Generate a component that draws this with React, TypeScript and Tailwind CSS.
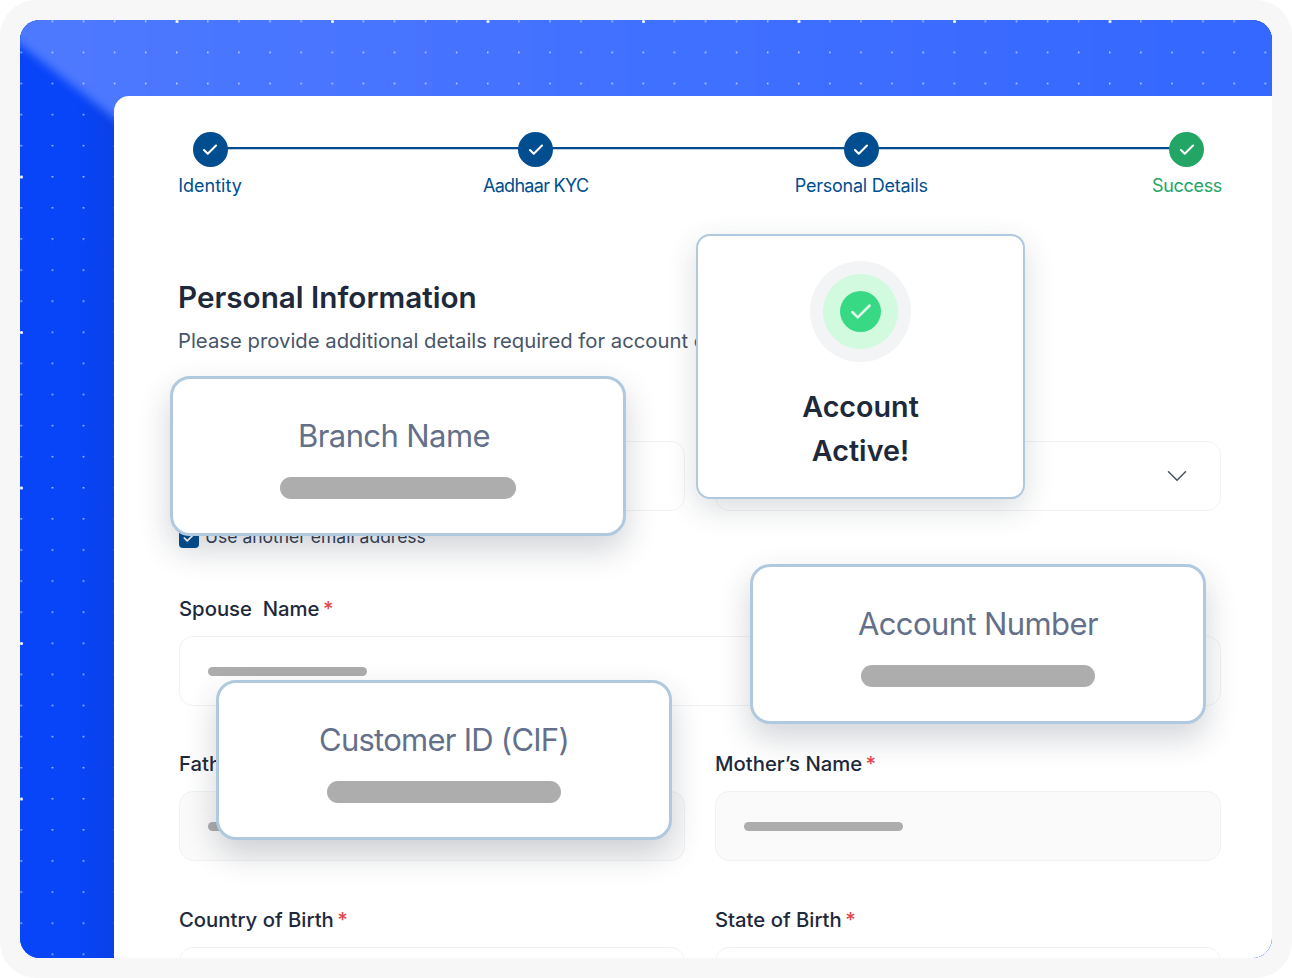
import { Check, ChevronDown } from "lucide-react"

const steps = [
  { label: "Identity", done: false, tracking: "tracking-normal" },
  { label: "Aadhaar KYC", done: false, tracking: "tracking-[-0.7px]" },
  { label: "Personal Details", done: false, tracking: "tracking-[-0.25px]" },
  { label: "Success", done: true, tracking: "tracking-[-0.3px]" },
]

function Stepper() {
  return (
    <div className="relative ml-[61px] mr-[50px] flex justify-between">
      <div className="absolute left-[35px] right-[35px] top-[15px] h-[2px] bg-[#004e8f] shadow-[0_1px_0_#b9cde0]" />
      {steps.map((s) => (
        <div key={s.label} className="relative flex w-[70px] flex-col items-center">
          <div className={`flex h-[35px] w-[35px] items-center justify-center rounded-full ${s.done ? "bg-[#22a565]" : "bg-[#004e8f]"}`}>
            <Check className="h-[18px] w-[18px] text-white" strokeWidth={2.8} />
          </div>
          <span className={`mt-[7px] whitespace-nowrap text-[18px] leading-[24px] ${s.tracking} ${s.done ? "text-[#22a565]" : "text-[#004e8f]"}`}>
            {s.label}
          </span>
        </div>
      ))}
    </div>
  )
}

function Label({ text }: { text: string }) {
  return (
    <div className="whitespace-pre text-[20.3px] leading-[26px] font-medium text-[#1e293b]">
      {text} <span className="-ml-[2px] text-[#e5484d]">*</span>
    </div>
  )
}

function Input({ bar = false, filled = false, chevron = false }: { bar?: boolean; filled?: boolean; chevron?: boolean }) {
  return (
    <div className={`mt-[14px] flex h-[70px] items-center justify-between rounded-[14px] border border-[#f1f2f4] pl-[28px] pr-[26px] ${filled ? "bg-[#fafafa]" : "bg-white"}`}>
      {bar && <div className="h-[9px] w-[159px] rounded-full bg-[#adadad]" />}
      {chevron && <ChevronDown className="ml-auto h-[34px] w-[34px] text-[#4b5563]" strokeWidth={1.1} />}
    </div>
  )
}

function FloatCard({ title, className, barWidth, titleClass = "" }: { title: string; className: string; barWidth: string; titleClass?: string }) {
  return (
    <div className={`absolute flex h-[160px] w-[456px] flex-col items-center rounded-[20px] border-[3px] border-[#b1c9df] bg-white pt-[35px] shadow-[0_14px_32px_rgba(30,41,59,0.2)] ${className}`}>
      <div className={`text-[31px] leading-[44px] tracking-[-0.6px] text-[#64708a] ${titleClass}`}>{title}</div>
      <div className={`mt-[19px] h-[22px] rounded-full bg-[#adadad] ${barWidth}`} />
    </div>
  )
}

export default function App() {
  return (
    <div className="h-[978px] w-[1292px] overflow-hidden bg-white font-['Inter',sans-serif]">
      <div className="h-full rounded-[36px] bg-[#f7f7f7] p-[20px]">
        <div className="relative h-[938px] overflow-hidden rounded-[20px] bg-[#0a45f5]">
          <svg className="absolute inset-0" width="1252" height="938" viewBox="0 0 1252 938">
            <defs>
              <linearGradient id="band" x1="0" y1="0" x2="1" y2="0">
                <stop offset="0" stopColor="#4f7aff" />
                <stop offset="1" stopColor="#3366ff" />
              </linearGradient>
              <linearGradient id="side" x1="0" y1="0" x2="94" y2="0" gradientUnits="userSpaceOnUse">
                <stop offset="0" stopColor="#0844f8" />
                <stop offset="0.6" stopColor="#0844f8" />
                <stop offset="1" stopColor="#0a40e6" />
              </linearGradient>
              <filter id="soft" x="-10%" y="-10%" width="120%" height="130%">
                <feGaussianBlur stdDeviation="5" />
              </filter>
              <pattern id="dots" x="0.5" y="0.5" width="31.1" height="31.1" patternUnits="userSpaceOnUse">
                <rect width="1.5" height="1.5" fill="#ffffff" fillOpacity="0.75" />
              </pattern>
              <pattern id="bigDots" x="0" y="0" width="155.5" height="155.5" patternUnits="userSpaceOnUse">
                <circle cx="1.5" cy="1.5" r="1.5" fill="#ffffff" />
              </pattern>
            </defs>
            <rect width="1252" height="938" fill="url(#side)" />
            <polygon points="-50,-15 -50,-50 1300,-50 1300,200 200,181" fill="url(#band)" filter="url(#soft)" />
            <rect width="1252" height="938" fill="url(#dots)" />
            <rect width="1252" height="938" fill="url(#bigDots)" />
          </svg>

          <div className="relative ml-[94px] mt-[76px] h-[862px] rounded-tl-[15px] bg-white pt-[36px]">
            <Stepper />

            <div className="ml-[65px] mr-[51px] mt-[80px]">
              <h1 className="-ml-px text-[29.7px] leading-[39px] font-semibold text-[#1e293b]">Personal Information</h1>
              <p className="-ml-px mt-[10px] whitespace-nowrap text-[20.3px] leading-[28px] text-[#475569]">
                Please provide additional details required for account opening
              </p>

              <div className="mt-[72px] grid grid-cols-2 gap-x-[30px]">
                <Input />
                <Input chevron />
              </div>
              <div className="mt-[17px] flex h-[20px] items-center gap-[6px]">
                <div className="flex h-[20px] w-[20px] items-center justify-center rounded-[4px] bg-[#004e8f]">
                  <Check className="h-[14px] w-[14px] text-white" strokeWidth={3} />
                </div>
                <span className="-mt-[2px] text-[17.5px] leading-[22px] text-[#334155]">Use another email address</span>
              </div>

              <div className="mt-[48px]">
                <Label text="Spouse  Name" />
                <Input bar />
              </div>

              <div className="mt-[45px] grid grid-cols-2 gap-x-[30px]">
                <div>
                  <Label text="Father’s Name" />
                  <Input bar filled />
                </div>
                <div>
                  <Label text="Mother’s Name" />
                  <Input bar filled />
                </div>
              </div>

              <div className="mt-[46px] grid grid-cols-2 gap-x-[30px]">
                <div>
                  <Label text="Country of Birth" />
                  <Input />
                </div>
                <div>
                  <Label text="State of Birth" />
                  <Input />
                </div>
              </div>
            </div>
          </div>

          <FloatCard title="Branch Name" className="left-[150px] top-[356px]" barWidth="w-[236px]" titleClass="-ml-[8px]" />
          <FloatCard title="Account Number" className="left-[730px] top-[544px]" barWidth="w-[234px]" />
          <FloatCard title="Customer ID (CIF)" className="left-[196px] top-[660px]" barWidth="w-[234px]" titleClass="tracking-[-0.75px]" />

          <div className="absolute left-[676px] top-[214px] flex h-[265px] w-[329px] flex-col items-center rounded-[14px] border-[2px] border-[#b1c9df] bg-white pt-[25px] shadow-[0_10px_30px_rgba(30,41,59,0.16)]">
            <div className="flex h-[101px] w-[101px] items-center justify-center rounded-full bg-[#f2f4f5]">
              <div className="flex h-[75px] w-[75px] items-center justify-center rounded-full bg-[#d1fadf]">
                <div className="flex h-[41px] w-[41px] items-center justify-center rounded-full bg-[#38d985]">
                  <Check className="h-[26px] w-[26px] text-[#e3f8ec]" strokeWidth={2.3} />
                </div>
              </div>
            </div>
            <div className="mt-[23px] text-center text-[28.7px] leading-[44px] font-semibold text-[#1e293b]">
              Account
              <br />
              Active!
            </div>
          </div>
        </div>
      </div>
    </div>
  )
}
